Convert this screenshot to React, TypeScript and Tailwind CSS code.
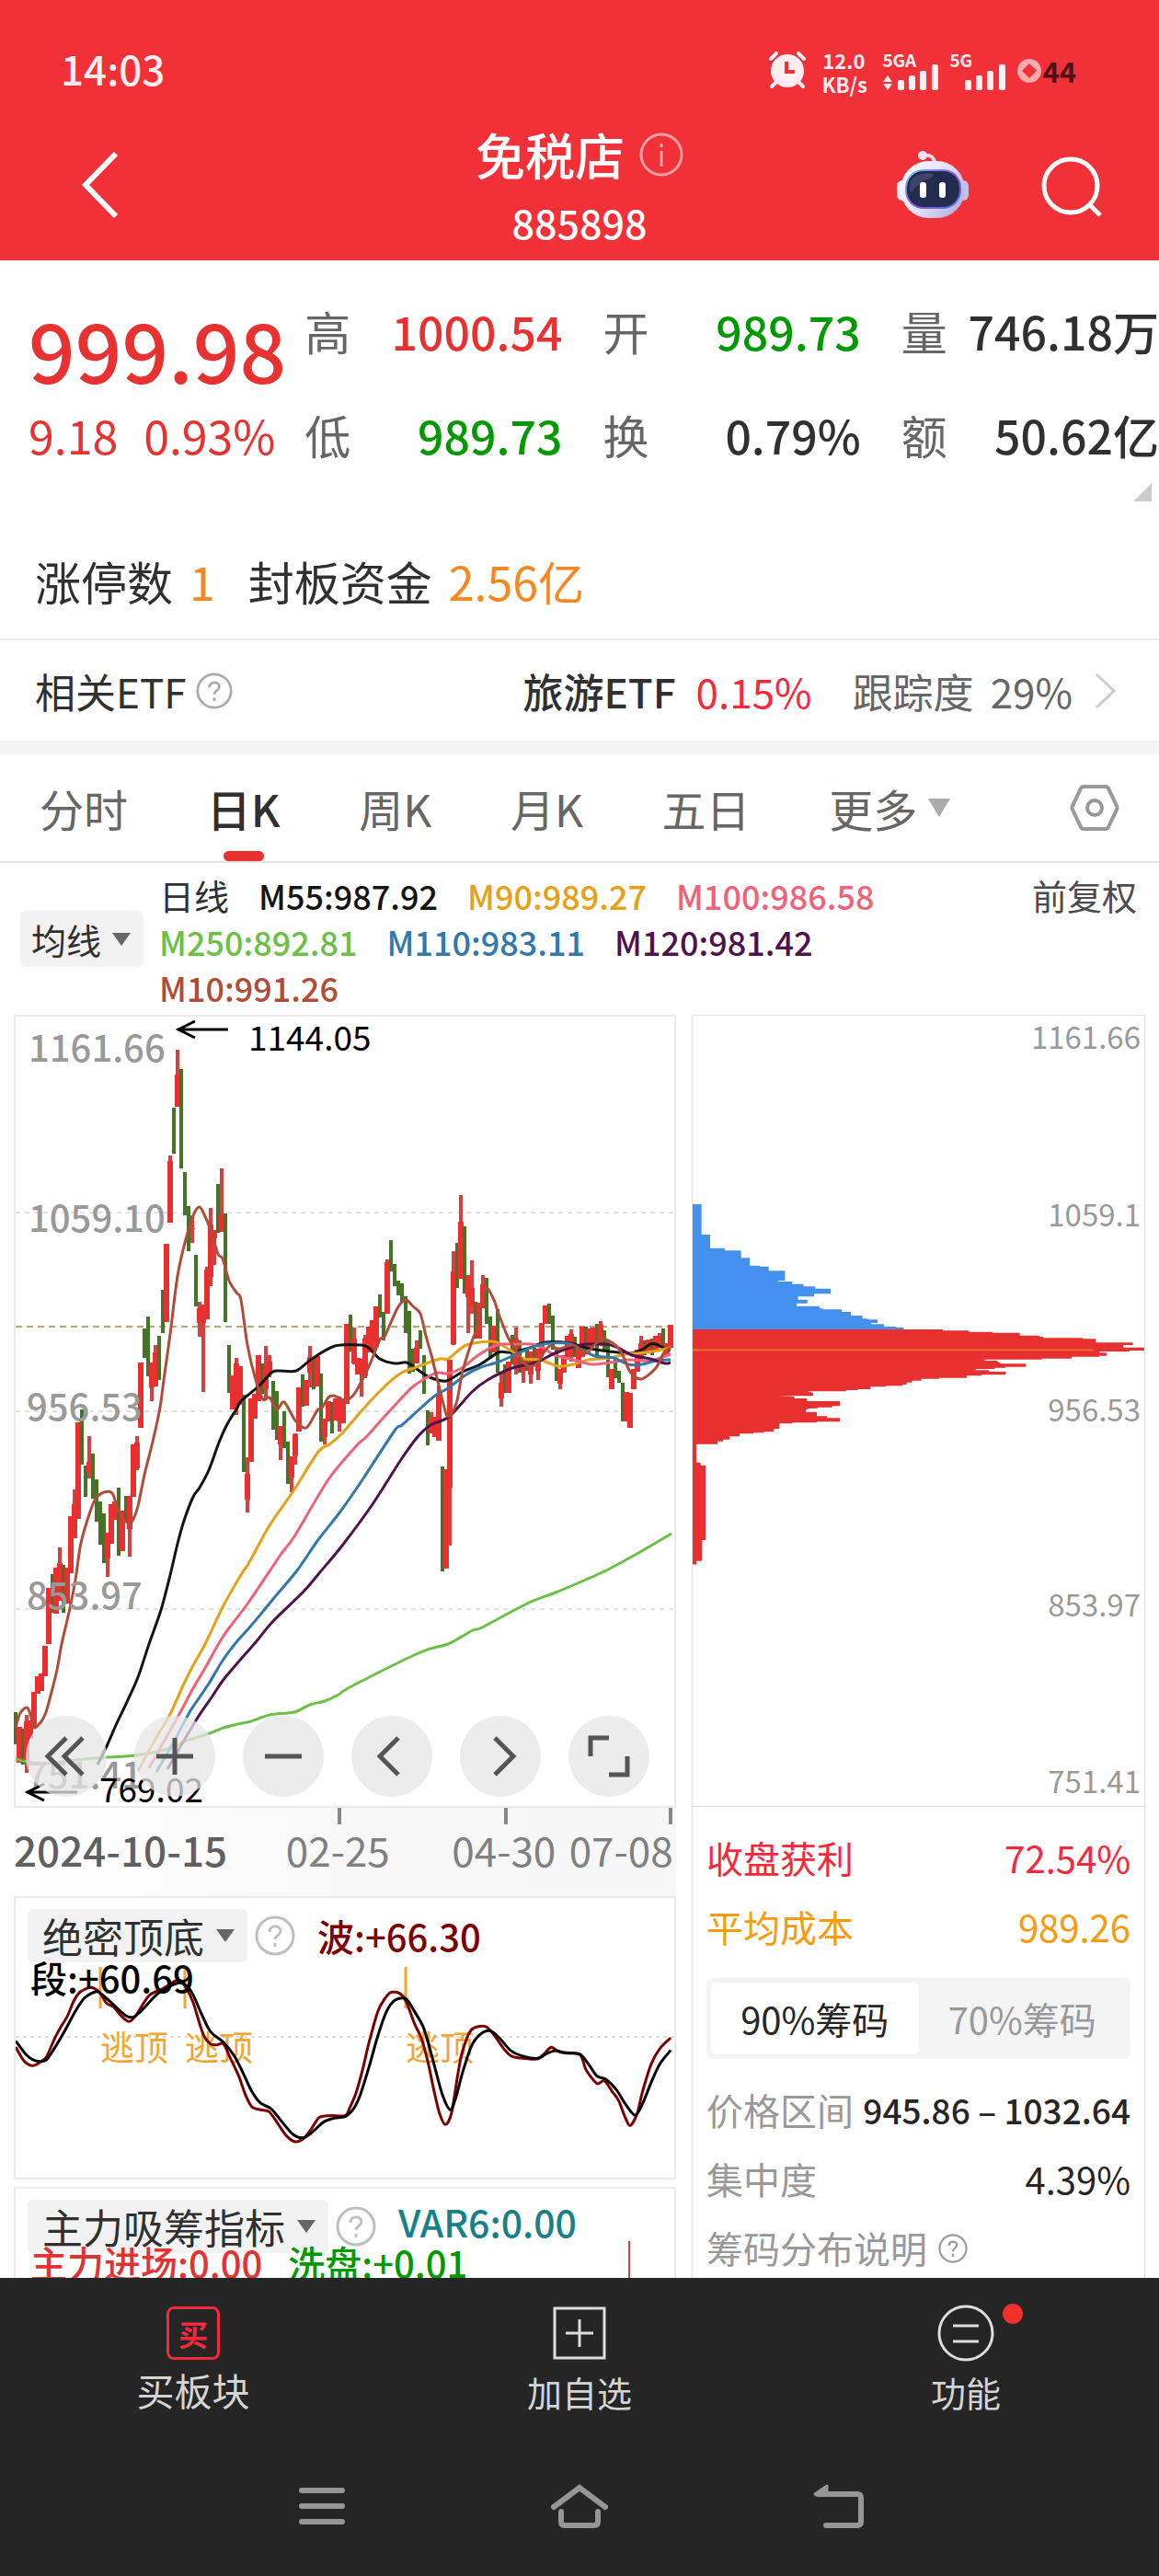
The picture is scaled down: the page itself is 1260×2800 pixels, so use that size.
import { useState, type ReactNode } from "react";

type Point = [number, number];

const points = (data: string): Point[] =>
  data
    .trim()
    .split(/\s+/)
    .map((pair) => pair.split(",").map(Number) as Point);

// Catmull-Rom spline through the given points.
const smooth = (data: string): string => {
  const p = points(data);
  let d = `M${p[0][0]} ${p[0][1]}`;
  for (let i = 0; i < p.length - 1; i++) {
    const a = p[i - 1] ?? p[i];
    const b = p[i];
    const c = p[i + 1];
    const e = p[i + 2] ?? c;
    d += `C${b[0] + (c[0] - a[0]) / 7} ${b[1] + (c[1] - a[1]) / 7} ${c[0] - (e[0] - b[0]) / 7} ${c[1] - (e[1] - b[1]) / 7} ${c[0]} ${c[1]}`;
  }
  return d;
};

// One entry per trading day: direction, high, low and, when the wick shows, body top and bottom.
const CANDLES = `g1861,1896 r1877,1916 g1879,1918 r1864,1927,1871,1915 r1870,1890 r1839,1877 r1822,1841 r1819,1838 r1789,1822 r1726,1787
g1711,1753 r1704,1754 r1682,1740,1699,1740 g1701,1753 r1704,1743 r1648,1710 r1619,1672,1635,1672 r1546,1651 g1532,1592 g1593,1627
r1561,1607,1589,1600 g1580,1629 g1608,1654 g1632,1679 g1645,1699 r1666,1714,1666,1694 r1635,1678 r1632,1652 g1617,1691 r1642,1686
g1626,1653 r1626,1692,1626,1662 r1570,1627 r1561,1598,1568,1596 r1481,1552 g1444,1476 g1431,1496 r1481,1523,1481,1508 r1462,1507,1470,1507 g1452,1500
g1402,1449 r1352,1437 r1256,1329,1262,1329 g1204,1254 r1141,1203,1168,1203 g1162,1270 g1274,1321 g1311,1360 r1321,1351,1335,1336 g1364,1420
r1415,1453,1422,1438 r1418,1513,1420,1438 r1377,1434,1380,1434 r1313,1398,1331,1388 r1337,1375,1337,1346 g1287,1340 r1270,1339,1320,1338 g1319,1437 g1462,1514 r1495,1532
r1476,1538,1482,1530 r1485,1527 g1516,1600 r1584,1644,1602,1630 r1520,1589 r1515,1542 r1473,1523 g1482,1515 r1463,1520,1485,1510 r1473,1497,1480,1492
g1501,1554 g1512,1565 r1550,1587,1550,1570 g1534,1574 g1567,1613 r1583,1622,1583,1606 r1558,1592,1559,1582 r1508,1556 g1494,1529 r1500,1528
r1463,1508,1475,1492 g1476,1510 r1474,1507 g1493,1567 r1542,1570,1542,1562 r1523,1545 g1524,1558 r1520,1544 r1518,1556,1520,1545 r1520,1547
r1439,1526 g1429,1469 r1443,1483,1455,1482 r1476,1494 r1477,1518,1477,1494 r1451,1498,1455,1495 r1442,1470 r1435,1470 r1420,1464 g1407,1432
g1426,1457 r1369,1428,1372,1428 g1348,1382 g1374,1398 g1392,1408 g1395,1415 g1409,1449 g1425,1493 g1466,1491 r1457,1482,1465,1482
g1446,1466 g1473,1515 g1533,1571 r1535,1558,1542,1558 r1540,1562 r1506,1566,1514,1566 g1594,1708 r1597,1705 r1478,1680,1478,1617 r1360,1462,1382,1461
g1351,1400 r1299,1390,1328,1390 g1333,1406 r1386,1449,1388,1410 r1370,1428,1400,1420 g1415,1455 r1416,1455 r1386,1422,1396,1422 g1389,1439 g1431,1477
r1441,1470 g1423,1492 r1493,1529,1503,1520 g1483,1514 r1480,1514 g1451,1483 r1443,1494,1455,1485 g1457,1492 r1477,1503,1477,1490 g1466,1490
r1469,1504,1469,1494 g1465,1485 r1466,1500,1466,1490 r1438,1472 r1419,1439 g1417,1439 g1430,1467 g1467,1501 r1488,1510,1488,1504 r1473,1492
r1452,1475 r1445,1480,1450,1474 g1453,1475 r1467,1487 r1442,1475 g1442,1468 r1444,1467 r1443,1463 g1439,1477 r1436,1463,1440,1460
g1446,1467 g1457,1497 r1488,1510 g1477,1498 g1490,1503 g1503,1545 r1513,1545 r1514,1552 r1488,1510 r1467,1491
r1452,1478,1460,1475 g1457,1473 r1456,1470 g1455,1473 r1452,1467 r1449,1465,1453,1465 g1444,1468 r1460,1473 r1440,1465`
  .trim()
  .split(/\s+/)
  .map((entry, i) => {
    const [high, low, top, bottom] = entry.slice(1).split(",").map(Number);
    return { x: 17 + i * 4, up: entry[0] === "r", high, low, top: top ?? high, bottom: bottom ?? low };
  });

const AVERAGES = [
  {
    name: "M250:892.81",
    color: "#6cc045",
    line: "17,1912 29,1915 50,1917 83,1913 117,1910 147,1908 187,1900 200,1893 228,1884 243,1878 263,1873 273,1871 293,1864 320,1861 337,1853 353,1849 368,1842 382,1833 457,1796 487,1787 514,1772 524,1769 573,1743 604,1731 637,1717 661,1706 694,1688 730,1667",
  },
  {
    name: "M55:987.92",
    color: "#141414",
    line: "106,1918 116,1898 126,1875 138,1850 150,1823 162,1787 175,1750 185,1712 193,1678 200,1653 210,1627 217,1617 227,1598 238,1568 247,1548 258,1530 262,1523 282,1506 295,1492 303,1490 322,1490 339,1477 364,1463 393,1462 402,1466 413,1477 429,1482 442,1481 453,1488 467,1497 485,1501 503,1491 522,1483 542,1470 555,1470 573,1466 593,1459 620,1460 637,1465 663,1469 685,1471 698,1467 707,1461 713,1461 723,1466 729,1467",
  },
  {
    name: "M90:989.27",
    color: "#e6a117",
    line: "150,1925 168,1892 185,1863 199,1832 210,1810 223,1787 242,1747 263,1710 270,1700 293,1658 318,1622 346,1578 358,1570 372,1558 390,1537 413,1512 435,1493 450,1487 478,1477 487,1477 507,1462 533,1458 542,1460 557,1469 570,1477 587,1478 607,1485 623,1483 640,1478 663,1476 680,1472 703,1470 729,1465",
  },
  {
    name: "M100:986.58",
    color: "#f0627a",
    line: "162,1922 177,1895 195,1863 210,1835 223,1813 243,1778 270,1742 305,1690 320,1670 357,1608 387,1572 398,1562 415,1543 427,1530 448,1508 470,1494 478,1492 487,1493 502,1487 520,1473 540,1462 555,1461 578,1461 592,1466 603,1473 623,1478 643,1483 663,1481 683,1478 707,1479 729,1472",
  },
  {
    name: "M110:983.11",
    color: "#3179ab",
    line: "170,1926 187,1897 205,1863 212,1852 227,1830 242,1805 257,1785 273,1767 297,1738 323,1707 345,1675 370,1643 395,1607 429,1555 437,1549 458,1530 473,1517 487,1509 507,1494 523,1486 543,1480 570,1468 590,1461 617,1460 630,1466 647,1474 667,1476 683,1483 698,1483 713,1479 729,1478",
  },
  {
    name: "M120:981.42",
    color: "#50124f",
    line: "182,1923 213,1870 230,1845 242,1827 257,1809 278,1785 297,1762 330,1730 347,1710 372,1680 405,1635 435,1588 453,1563 468,1549 488,1540 513,1513 530,1500 557,1487 583,1481 603,1471 630,1462 657,1461 670,1464 687,1473 707,1477 723,1482 729,1481",
  },
  {
    name: "M10:991.26",
    color: "#b04c3a",
    line: "17,1877 22,1862 29,1856 33,1863 37,1878 45,1871 50,1861 55,1843 62,1815 67,1787 76,1748 82,1717 88,1677 98,1643 104,1629 113,1622 122,1623 128,1640 135,1652 141,1656 145,1651 150,1637 157,1603 166,1567 174,1530 178,1500 185,1450 193,1387 202,1347 211,1319 217,1312 222,1320 229,1337 237,1363 242,1368 249,1392 257,1405 262,1413 269,1462 278,1500 286,1521 293,1519 301,1532 309,1524 321,1544 333,1552 345,1533 350,1530 357,1519 362,1517 368,1519 375,1523 386,1514 402,1483 413,1456 418,1453 432,1422 441,1413 449,1420 457,1428 463,1452 470,1477 478,1510 485,1537 488,1539 491,1537 497,1522 503,1490 513,1458 517,1448 521,1430 528,1400 537,1413 542,1428 552,1453 562,1470 570,1482 577,1485 585,1481 592,1469 598,1463 608,1466 623,1462 632,1468 638,1471 647,1461 656,1455 670,1463 677,1473 685,1491 697,1499 713,1487 722,1470 729,1465",
  },
];

const BLUE_CHIPS =
  "39,87 68,87 68,186 96,186 96,230 144,230 144,238 197,238 197,262 225,262 225,287 258,287 258,290 287,290 287,304 340,304 340,336 318,336 318,339 364,339 364,347 401,347 401,355 439,355 439,362 489,362 489,379 435,379 435,388 383,388 383,398 413,398 413,410 378,410 378,419 453,419 453,427 464,427 464,430 525,430 525,438 555,438 555,450 593,450 593,460 610,460 610,463 642,463 642,474 622,474 622,478 663,478 663,486 701,486 701,488 727,488 727,495 39,495";
const RED_CHIPS =
  "39,495 855,495 855,499 940,499 940,503 1018,503 1018,506 1106,506 1106,515 1170,515 1170,519 1182,519 1182,523 1312,523 1312,526 1354,526 1354,538 1475,538 1475,546 1444,546 1444,554 1512,554 1512,564 1465,564 1465,567 1366,567 1366,571 1389,571 1389,581 1366,581 1366,584 1275,584 1275,590 1178,590 1178,593 992,593 992,597 1030,597 1040,604 1043,607 1125,607 1125,617 1058,617 1058,620 1023,620 1023,624 962,624 962,628 1006,628 1006,633 1060,633 1060,643 981,643 981,646 933,646 933,653 843,653 843,656 785,656 785,662 755,662 755,668 737,668 737,675 724,675 724,679 669,679 669,682 619,682 619,690 578,690 578,693 540,693 540,697 413,697 432,702 432,712 318,712 370,714 370,720 411,720 411,729 519,729 519,745 494,745 494,749 447,749 447,752 420,753 408,757 408,764 444,764 444,778 477,778 477,784 519,784 519,796 444,796 444,799 364,799 364,802 321,802 321,819 303,819 303,829 271,829 271,832 237,832 237,835 192,835 192,844 159,844 159,854 138,854 138,860 120,860 120,869 51,869 51,929 65,929 65,939 81,939 81,1182 69,1182 69,1250 51,1250 51,1262 39,1262";

const FAST_WAVE =
  "36,555 55,600 75,616 95,602 108,585 125,530 140,490 155,455 170,405 185,375 210,361 230,378 245,412 262,425 280,455 297,472 312,455 325,425 345,385 375,365 400,342 415,338 430,365 445,410 460,480 470,520 485,545 500,548 515,545 530,590 550,650 565,710 580,750 600,760 620,766 640,805 660,845 680,864 700,852 718,820 735,785 760,779 795,779 805,755 820,705 835,630 850,540 870,440 885,400 900,377 920,380 935,405 955,480 970,525 985,600 1000,700 1012,770 1026,808 1040,770 1055,640 1065,570 1085,500 1118,488 1140,520 1160,560 1180,586 1220,594 1240,593 1255,575 1270,556 1290,572 1335,580 1350,630 1375,674 1392,665 1410,700 1425,730 1440,785 1452,811 1468,770 1480,700 1500,610 1520,560 1545,525";
const SLOW_WAVE =
  "36,535 60,580 75,596 92,602 108,595 125,560 150,500 175,435 195,395 222,374 240,390 265,422 290,453 308,457 330,430 360,385 385,362 412,346 430,355 445,385 465,450 485,505 515,540 540,585 560,640 580,700 600,738 625,757 650,800 675,840 700,851 725,825 745,800 770,787 795,782 815,755 830,710 850,620 870,520 890,440 910,402 935,398 955,440 975,490 990,560 1005,640 1020,715 1037,760 1050,720 1065,640 1085,555 1105,515 1128,502 1150,525 1175,565 1200,583 1238,592 1260,576 1280,567 1305,575 1335,578 1355,610 1375,650 1395,660 1420,695 1440,740 1463,778 1480,740 1500,670 1520,610 1545,565";

function Signal({ label, arrows }: { label: string; arrows?: boolean }) {
  return (
    <div className="flex flex-col text-[19px]/[18px] font-bold">
      <span>{label}</span>
      <svg width="62" height="28" viewBox="0 0 62 28" className="-mt-1" fill="#ffeef0" aria-hidden="true">
        {arrows && <path d="M1 19l5-7 5 7zM1 21h10l-5 7z" />}
        <rect x="17" y="17" width="7" height="11" rx="2" />
        <rect x="29" y="12" width="7" height="16" rx="2" />
        <rect x="41" y="7" width="7" height="21" rx="2" />
        <rect x="54" y="0" width="7" height="28" rx="2" />
      </svg>
    </div>
  );
}

function StatusBar() {
  return (
    <div className="flex h-[138px] items-start justify-between pt-11 pr-[90px] pl-[66px] text-[#ffeef0]">
      <time className="text-[44px]/[60px] font-medium">14:03</time>
      <div className="flex items-start pt-2">
        <svg width="42" height="40" viewBox="0 0 42 40" className="mt-1 mr-4" aria-label="闹钟">
          <g stroke="#ffeef0" strokeWidth="4" strokeLinecap="round">
            <path d="M3 8l6-6M39 8l-6-6M9 33l-5 5M33 33l5 5" />
          </g>
          <circle cx="21" cy="21" r="18" fill="#ffeef0" />
          <path d="M20 11v11h9" fill="none" stroke="#f23038" strokeWidth="4" />
        </svg>
        <div className="mr-[18px] w-12 text-center text-[22px]/[26px] font-bold">
          12.0
          <br />
          KB/s
        </div>
        <div className="flex gap-[11px] pt-1">
          <Signal label="5GA" arrows />
          <Signal label="5G" />
        </div>
        <div className="ml-[11px] flex items-center text-[31px]/[50px] font-bold text-[#4c1216]">
          <svg width="28" height="28" viewBox="0 0 28 28" aria-label="电池">
            <circle cx="14" cy="14" r="13" fill="#ffa9ac" />
            <path d="M14 6l8 8-8 8-8-8z" fill="#f23038" />
          </svg>
          44
        </div>
      </div>
    </div>
  );
}

function Robot() {
  return (
    <svg width="80" height="76" viewBox="0 0 80 76" aria-hidden="true">
      <defs>
        <linearGradient id="shell" x1="0" y1="0" x2="1" y2="0.6">
          <stop offset="0" stopColor="#fff" />
          <stop offset="0.55" stopColor="#e6e3f8" />
          <stop offset="1" stopColor="#b9b6e6" />
        </linearGradient>
        <linearGradient id="visor" x1="0" y1="0" x2="1" y2="1">
          <stop offset="0" stopColor="#6fd0ee" />
          <stop offset="0.5" stopColor="#8f4ce0" />
          <stop offset="1" stopColor="#4b7bea" />
        </linearGradient>
      </defs>
      <path d="M30 6c8-1 12 2 12 9" fill="none" stroke="#f3d3e0" strokeWidth="4" />
      <circle cx="29" cy="6" r="5" fill="#f0e4f2" />
      <rect x="1" y="33" width="12" height="22" rx="6" fill="#eceafa" />
      <rect x="67" y="33" width="12" height="22" rx="6" fill="#c4c0ec" />
      <rect x="5" y="12" width="70" height="62" rx="31" fill="url(#shell)" />
      <rect x="10" y="21" width="61" height="43" rx="20" fill="url(#visor)" />
      <rect x="12" y="23" width="57" height="39" rx="18" fill="#232b4f" />
      <path d="M15 38c2-9 8-12 20-13 6 0 7 3 2 6-9 3-16 9-20 15-2-1-3-4-2-8z" fill="#3d456a" />
      <rect x="26" y="35" width="7" height="17" rx="3" fill="#fff" />
      <rect x="47" y="35" width="7" height="17" rx="3" fill="#fff" />
    </svg>
  );
}

function Header() {
  return (
    <header className="bg-[#f23038] text-white">
      <StatusBar />
      <div className="grid h-[145px] grid-cols-3">
        <div className="pt-[26px] pl-[86px]">
          <button type="button" aria-label="返回" className="block">
            <svg width="44" height="74" viewBox="0 0 44 74" fill="none" stroke="#fff" strokeWidth="6">
              <path d="M40 3L7 37l33 34" />
            </svg>
          </button>
        </div>
        <div className="flex flex-col items-center">
          <div className="flex items-center gap-4">
            <h1 className="text-[54px]/[60px] font-medium">免税店</h1>
            <button type="button" aria-label="说明">
              <svg width="48" height="48" viewBox="0 0 48 48" fill="none" stroke="#fba2a5" strokeWidth="3">
                <circle cx="24" cy="24" r="22" />
                <path d="M24 20v17M24 12v4" />
              </svg>
            </button>
          </div>
          <p className="mt-[18px] text-[43px]/[50px] font-medium">885898</p>
        </div>
        <div className="flex items-start justify-end gap-[76px] pt-[25px] pr-[60px]">
          <button type="button" aria-label="智能助手">
            <Robot />
          </button>
          <button type="button" aria-label="搜索" className="mt-1.5">
            <svg width="70" height="70" viewBox="0 0 70 70" fill="none" stroke="#fff" strokeWidth="5">
              <circle cx="34" cy="33" r="29" />
              <path d="M55 54l11 11" />
            </svg>
          </button>
        </div>
      </div>
    </header>
  );
}

function Pair({ label, value, tone }: { label: string; value: string; tone: string }) {
  return (
    <div className="flex justify-between whitespace-nowrap">
      <dt className="text-[#666]">{label}</dt>
      <dd className={`font-medium ${tone}`}>{value}</dd>
    </div>
  );
}

function Quote() {
  return (
    <section className="relative grid grid-cols-[256fr_280fr_280fr_280fr] gap-x-11 pt-[39px] pb-5 pl-[31px] text-[50px]/[74px]">
      <div className="min-w-0 whitespace-nowrap text-[#e83232]">
        <p className="text-[89px]/[113px] font-medium">999.98</p>
        <p className="flex gap-7">
          <span>9.18</span>
          <span>0.93%</span>
        </p>
      </div>
      <dl className="flex flex-col gap-[39px]">
        <Pair label="高" value="1000.54" tone="text-[#e83232]" />
        <Pair label="低" value="989.73" tone="text-[#009a00]" />
      </dl>
      <dl className="flex flex-col gap-[39px]">
        <Pair label="开" value="989.73" tone="text-[#009a00]" />
        <Pair label="换" value="0.79%" tone="text-[#303030]" />
      </dl>
      <dl className="flex flex-col gap-[39px]">
        <Pair label="量" value="746.18万" tone="text-[#303030]" />
        <Pair label="额" value="50.62亿" tone="text-[#303030]" />
      </dl>
      <svg className="absolute right-2 -bottom-4" width="20" height="20" viewBox="0 0 20 20" aria-hidden="true">
        <path d="M20 0v20H0z" fill="#ccc" />
      </svg>
    </section>
  );
}

function Help({ size, color }: { size: number; color: string }) {
  return (
    <button type="button" aria-label="帮助" className="shrink-0">
      <svg width={size} height={size} viewBox="0 0 44 44" fill="none" stroke={color} strokeWidth="3">
        <circle cx="22" cy="22" r="20" />
        <path d="M16 18c0-8 12-8 12-1 0 4-6 5-6 9M22 30v4" />
      </svg>
    </button>
  );
}

function EtfRow() {
  return (
    <div className="flex h-[111px] items-center border-t-2 border-[#ebebeb] pr-[46px] pl-[38px] text-[44px]/[60px] text-[#303030]">
      <span>相关ETF</span>
      <span className="ml-2.5 flex">
        <Help size={40} color="#aaa" />
      </span>
      <a href="#etf" className="ml-auto flex items-center whitespace-nowrap">
        <span className="font-medium">旅游ETF</span>
        <span className="ml-[22px] text-[#f5283c]">0.15%</span>
        <span className="ml-11 text-[#666]">跟踪度</span>
        <span className="ml-[18px] text-[#666]">29%</span>
        <svg className="ml-6" width="24" height="40" viewBox="0 0 24 40" fill="none" stroke="#ccc" strokeWidth="3" aria-hidden="true">
          <path d="M2 2l19 18L2 38" />
        </svg>
      </a>
    </div>
  );
}

const TABS = ["分时", "日K", "周K", "月K", "五日"];

function Tabs() {
  const [active, setActive] = useState("日K");
  return (
    <div className="flex h-[118px] items-stretch justify-between border-b-2 border-[#e6e6e6] pr-[43px] pl-[43px] text-[48px]/[60px] text-[#666]">
      {TABS.map((tab) => (
        <button key={tab} type="button" onClick={() => setActive(tab)} className={tab === active ? "relative font-medium text-[#303030]" : "relative"}>
          {tab}
          {tab === active && <span className="absolute bottom-0 left-1/2 h-[11px] w-11 -translate-x-1/2 rounded-full bg-[#e83030]" />}
        </button>
      ))}
      <button type="button" aria-haspopup="menu" className="flex items-center gap-3">
        更多
        <svg width="24" height="20" viewBox="0 0 24 20" aria-hidden="true">
          <path d="M0 0h24L12 20z" fill="#aaa" />
        </svg>
      </button>
      <button type="button" aria-label="图表设置" className="ml-11">
        <svg width="54" height="52" viewBox="0 0 54 52" fill="none" stroke="#999" strokeWidth="4">
          <path d="M15 3h24q2 0 3 2l9 19q1 2 0 4l-9 19q-1 2-3 2H15q-2 0-3-2L3 28q-1-2 0-4l9-19q1-2 3-2z" />
          <circle cx="27" cy="26" r="8" />
        </svg>
      </button>
    </div>
  );
}

function Picker({ label, options, className }: { label: string; options: string[]; className: string }) {
  return (
    <div className="relative shrink-0">
      <select aria-label={label} defaultValue={options[0]} className={`block appearance-none rounded-md bg-[#f2f2f2] text-[#303030] ${className}`}>
        {options.map((option) => (
          <option key={option}>{option}</option>
        ))}
      </select>
      <svg className="pointer-events-none absolute top-1/2 right-3.5 -translate-y-1/2" width="20" height="14" viewBox="0 0 20 14" aria-hidden="true">
        <path d="M0 0h20L10 14z" fill="#666" />
      </svg>
    </div>
  );
}

function Legend() {
  const order = [1, 2, 3, 0, 4, 5, 6];
  return (
    <div className="flex items-start pt-2.5 pr-6 pb-[5px] pl-[22px] text-[38px]/[50px]">
      <div className="mt-[42px] mr-[17px]">
        <Picker label="主图指标" options={["均线"]} className="h-[61px] w-[134px] pl-3 text-[38px]/[50px]" />
      </div>
      <ul className="flex max-w-[820px] flex-wrap gap-x-8 text-[36px]/[50px] font-medium whitespace-nowrap">
        <li className="text-[38px]/[50px] font-normal text-[#303030]">日线</li>
        {order.map((i) => (
          <li key={AVERAGES[i].name} style={{ color: AVERAGES[i].color }}>
            {AVERAGES[i].name}
          </li>
        ))}
      </ul>
      <button type="button" className="ml-auto shrink-0 text-[#4c4c4c]">
        前复权
      </button>
    </div>
  );
}

const CONTROLS: { label: string; icon: ReactNode }[] = [
  { label: "最早", icon: <path d="M44 24L24 44l20 20M62 24L42 44l20 20" /> },
  { label: "放大", icon: <path d="M24 44h40M44 24v40" /> },
  { label: "缩小", icon: <path d="M24 44h40" /> },
  { label: "左移", icon: <path d="M51 24L31 44l20 20" /> },
  { label: "右移", icon: <path d="M38 24l20 20-20 20" /> },
  { label: "全屏", icon: <path d="M24 44V24h20M64 44v20H44" /> },
];

function MainChart() {
  return (
    <div className="relative border-2 border-[#ebebeb]">
      <svg viewBox="17 1105 716 858" className="block h-auto w-full overflow-visible" fill="none" role="img" aria-label="日K线图">
        <g stroke="#e2e2e2" strokeWidth="2" strokeDasharray="5 5">
          <path d="M17 1318H733M17 1534H733M17 1749H733" />
        </g>
        <path d="M17 1442H733" stroke="#b9a774" strokeWidth="2" strokeDasharray="7 5" />
        <g>
          {CANDLES.map((c) => (
            <g key={c.x}>
              <rect x={c.x - 2} y={c.high} width="4" height={c.low - c.high} fill={c.up ? "#d64040" : "#447527"} />
              {c.up && <rect x={c.x - 3} y={c.top} width="6" height={c.bottom - c.top} fill="#e83030" />}
            </g>
          ))}
        </g>
        <g strokeWidth="3" strokeLinejoin="round">
          {AVERAGES.map((a) => (
            <path key={a.name} d={smooth(a.line)} stroke={a.color} />
          ))}
        </g>
        <g fill="#999" fontSize="40" fontWeight="500">
          <text x="31" y="1154">1161.66</text>
          <text x="31" y="1339">1059.10</text>
          <text x="29" y="1544">956.53</text>
          <text x="29" y="1749">853.97</text>
          <text x="29" y="1944">751.41</text>
        </g>
        <g stroke="#000" strokeWidth="3">
          <path d="M248 1119H193M212 1110l-18 9 18 9" />
          <path d="M84 1948H29M48 1939l-18 9 18 9" />
        </g>
        <g fill="#000" fontSize="37">
          <text x="270" y="1142">1144.05</text>
          <text x="108" y="1959">769.02</text>
        </g>
      </svg>
      <div className="absolute right-[27px] bottom-2.5 left-[11px] flex justify-between">
        {CONTROLS.map((c) => (
          <button key={c.label} type="button" aria-label={c.label} className="rounded-full bg-[#e6e6e6]/75">
            <svg width="88" height="88" viewBox="0 0 88 88" fill="none" stroke="#555" strokeWidth="5">
              {c.icon}
            </svg>
          </button>
        ))}
      </div>
    </div>
  );
}

function DateAxis() {
  return (
    <div className="h-24 bg-linear-to-r from-white via-[#f8f8f8] to-[#f7f7f7]">
      <svg viewBox="15 0 720 18" className="block h-auto w-full" stroke="#888" strokeWidth="4" aria-hidden="true">
        <path d="M369 0v18M550 0v18M729 0v18" />
      </svg>
      <div className="grid grid-cols-[295fr_180fr_127fr_116fr] text-[44px]/[54px] whitespace-nowrap text-[#808080]">
        <span className="font-medium text-[#606060]">2024-10-15</span>
        <span>02-25</span>
        <span>04-30</span>
        <span>07-08</span>
      </div>
    </div>
  );
}

function WavePanel() {
  return (
    <div className="relative border-2 border-[#ebebeb]">
      <svg viewBox="17 2063 716 304" className="block h-auto w-full" fill="none" role="img" aria-label="绝密顶底指标图">
        <path d="M17 2214H733" stroke="#dedede" strokeWidth="2" strokeDasharray="4 4" />
        <path d="M109 2138v45M201 2138v45M441 2138v45" stroke="#f5a52c" strokeWidth="3" />
        <g fill="#f5a52c" fontSize="37">
          <text x="109" y="2240">逃顶</text>
          <text x="201" y="2240">逃顶</text>
          <text x="441" y="2240">逃顶</text>
        </g>
        <g transform="translate(0 2040) scale(.472 .3333)" strokeWidth="3">
          <path d={smooth(FAST_WAVE)} stroke="#7d0000" vectorEffect="non-scaling-stroke" />
          <path d={smooth(SLOW_WAVE)} stroke="#000" vectorEffect="non-scaling-stroke" />
        </g>
      </svg>
      <div className="absolute top-3 left-[13px] flex items-center gap-2 whitespace-nowrap">
        <Picker label="副图指标一" options={["绝密顶底"]} className="h-[58px] w-[239px] pl-4 text-[44px]/[58px]" />
        <Help size={44} color="#bfbfbf" />
        <span className="ml-4 text-[40px]/[50px] font-medium text-[#7d0000]">波:+66.30</span>
      </div>
      <span className="absolute top-[61px] left-4 text-[40px]/[50px] font-medium text-black">段:+60.69</span>
    </div>
  );
}

function InflowPanel() {
  return (
    <div className="relative mt-2 h-[300px] border-2 border-[#ebebeb] pt-3 pl-[13px] whitespace-nowrap">
      <div className="flex items-center gap-2">
        <Picker label="副图指标二" options={["主力吸筹指标"]} className="h-[58px] w-[327px] pl-4 text-[44px]/[58px]" />
        <Help size={44} color="#bfbfbf" />
        <span className="-mt-3 ml-4 text-[41px]/[50px] font-medium text-[#178089]">VAR6:0.00</span>
      </div>
      <div className="absolute top-[55px] left-4 flex gap-7 text-[40px]/[50px] font-medium">
        <span className="text-[#e03434]">主力进场:0.00</span>
        <span className="text-[#009a00]">洗盘:+0.01</span>
      </div>
      <span className="absolute top-[57px] right-12 bottom-0 w-0.5 bg-[#d84040]" />
    </div>
  );
}

function ChipPanel() {
  const [range, setRange] = useState("90%筹码");
  return (
    <section className="border border-[#e0e0e0]">
      <svg viewBox="753 1104 491 859" className="block h-auto w-full overflow-visible" role="img" aria-label="筹码分布图">
        <g transform="translate(740 1280) scale(.3333)">
          <polygon points={BLUE_CHIPS} fill="#4590ee" />
          <polygon points={RED_CHIPS} fill="#e83030" />
          <path d="M39 562H1345" stroke="#f27424" strokeWidth="5" />
        </g>
        <g fill="#999" fontSize="33" textAnchor="end">
          <text x="1240" y="1140">1161.66</text>
          <text x="1240" y="1333">1059.1</text>
          <text x="1240" y="1545">956.53</text>
          <text x="1240" y="1757">853.97</text>
          <text x="1240" y="1949">751.41</text>
        </g>
      </svg>
      <div className="border-t border-[#e0e0e0] px-[15px] pt-[18px] text-[40px]/[75px] text-[#262626]">
        <p className="flex justify-between text-[#f5283c]">
          <span>收盘获利</span>
          <span>72.54%</span>
        </p>
        <p className="flex justify-between text-[#f99a0f]">
          <span>平均成本</span>
          <span>989.26</span>
        </p>
        <div className="mt-[18px] mb-[18px] grid grid-cols-2 rounded-lg bg-[#f4f4f4] p-[5px] text-[40px]/[78px]">
          {["90%筹码", "70%筹码"].map((item) => (
            <button key={item} type="button" aria-pressed={item === range} onClick={() => setRange(item)} className={item === range ? "rounded-md bg-white" : "text-[#999]"}>
              {item}
            </button>
          ))}
        </div>
        <p className="flex justify-between whitespace-nowrap">
          <span className="text-[#999]">价格区间</span>
          <span className="text-[37px] font-medium">945.86 – 1032.64</span>
        </p>
        <p className="flex justify-between">
          <span className="text-[#999]">集中度</span>
          <span>4.39%</span>
        </p>
        <p className="flex items-center gap-3 text-[#999]">
          筹码分布说明
          <Help size={32} color="#999" />
        </p>
      </div>
    </section>
  );
}

function BottomNav() {
  return (
    <footer className="shrink-0 bg-[#252525]">
      <nav className="grid grid-cols-3 pt-[28px] text-[38px]/[56px] text-[#d4d4d4]">
        <button type="button" className="flex flex-col items-center gap-1">
          <span className="my-[3px] flex h-[58px] w-[58px] items-center justify-center rounded-lg border-3 border-[#f5283c] text-[32px]/[40px] font-bold text-[#f5283c]" aria-hidden="true">
            买
          </span>
          <span className="text-[41px]/[50px]">买板块</span>
        </button>
        <button type="button" className="flex flex-col items-center gap-1">
          <svg width="64" height="64" viewBox="0 0 64 64" fill="none" stroke="#ddd" strokeWidth="3" aria-hidden="true">
            <path d="M5 5h54v54H5zM32 17v30M17 32h30" />
          </svg>
          <span>加自选</span>
        </button>
        <button type="button" className="flex flex-col items-center gap-1">
          <span className="relative">
            <svg width="64" height="64" viewBox="0 0 64 64" fill="none" stroke="#ddd" strokeWidth="3" aria-hidden="true">
              <circle cx="32" cy="32" r="29" />
              <path d="M18 24h28M18 41h28" />
            </svg>
            <span className="absolute top-0 left-[72px] h-[22px] w-[22px] rounded-full bg-[#f0302f]" />
          </span>
          <span>功能</span>
        </button>
      </nav>
      <div className="flex h-[172px] items-center justify-center gap-[222px] pt-5 pl-1">
        <button type="button" aria-label="最近任务">
          <svg width="52" height="42" viewBox="0 0 52 42" stroke="#969696" strokeWidth="6" strokeLinecap="round">
            <path d="M4 4h44M4 21h44M4 38h44" />
          </svg>
        </button>
        <button type="button" aria-label="主屏幕">
          <svg width="64" height="50" viewBox="0 0 64 50" fill="none" stroke="#969696" strokeWidth="6" strokeLinecap="round">
            <path d="M4 26L32 5l28 21M12 31v11q0 4 4 4h32q4 0 4-4V31" />
          </svg>
        </button>
        <button type="button" aria-label="返回上一页">
          <svg width="56" height="50" viewBox="0 0 56 50" fill="none" stroke="#969696" strokeWidth="6" strokeLinecap="round">
            <path d="M5 12h43q4 0 4 4v26q0 4-4 4H14" />
            <path d="M2 12L15 3v10z" fill="#969696" strokeWidth="3" strokeLinejoin="round" />
          </svg>
        </button>
      </div>
    </footer>
  );
}

export default function App() {
  return (
    <div className="flex h-screen flex-col overflow-hidden bg-white font-['Noto_Sans_CJK_SC','Noto_Sans',sans-serif]">
      <Header />
      <main className="min-h-0 flex-1 overflow-hidden">
        <Quote />
        <div className="flex h-[165px] items-center pt-[38px] pl-[38px] text-[50px]/[60px] whitespace-nowrap text-[#303030]">
          <span>涨停数</span>
          <span className="ml-[18px] text-[#f9871f]">1</span>
          <span className="ml-9">封板资金</span>
          <span className="ml-[18px] text-[#f9871f]">2.56亿</span>
        </div>
        <EtfRow />
        <div className="h-[15px] bg-[#f4f4f4]" />
        <Tabs />
        <Legend />
        <div className="grid grid-cols-[720fr_493fr] gap-x-[17px] px-[15px]">
          <section>
            <MainChart />
            <DateAxis />
            <WavePanel />
            <InflowPanel />
          </section>
          <ChipPanel />
        </div>
      </main>
      <BottomNav />
    </div>
  );
}
